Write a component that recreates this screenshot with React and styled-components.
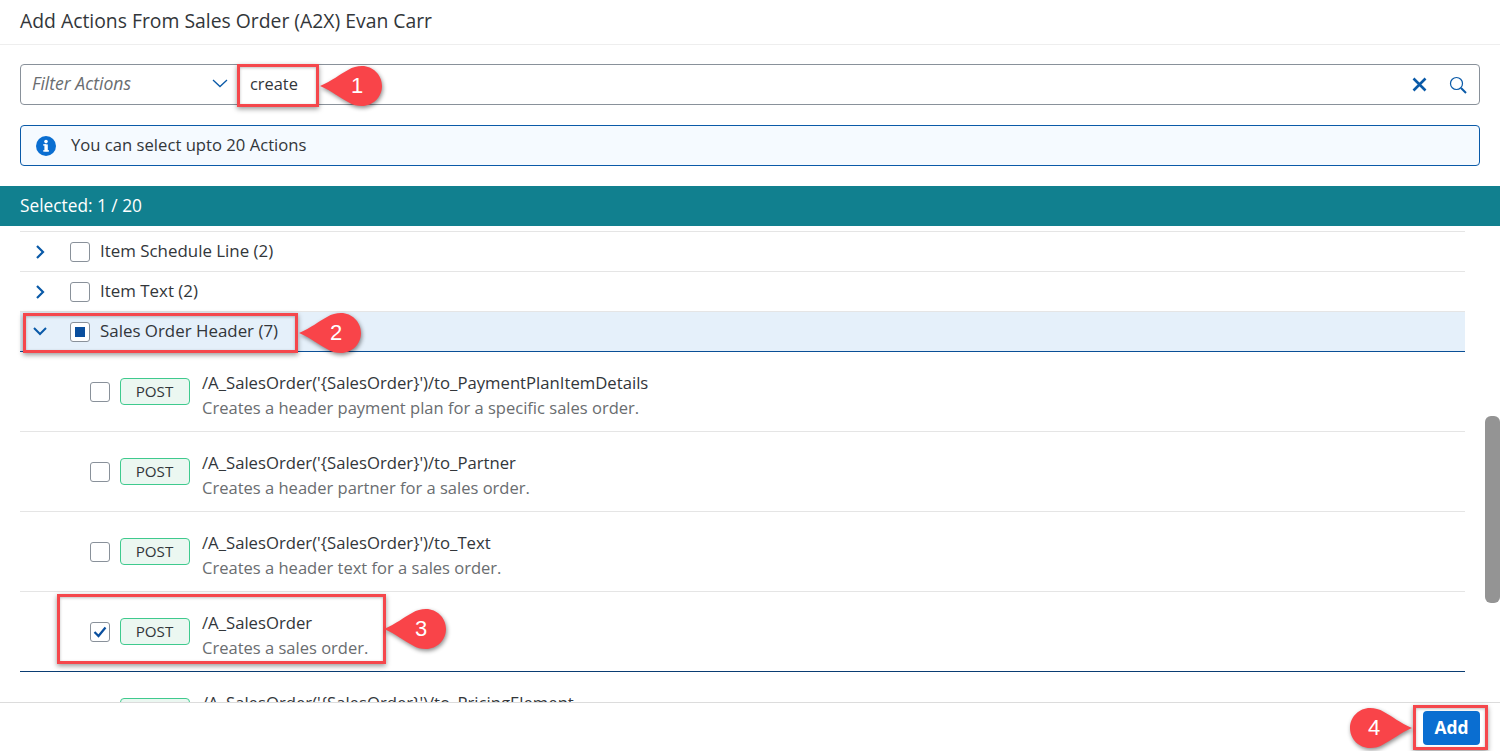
import React from "react";
import styled, { createGlobalStyle } from "styled-components";

const Global = createGlobalStyle`
  html, body { margin: 0; padding: 0; background: #fff; overflow: hidden; }
  * { box-sizing: border-box; }
  body { font-family: "Open Sans", "Liberation Sans", sans-serif; color: #32363a; }
`;

const Page = styled.div`
  position: relative;
  width: 1500px;
  height: 751px;
  display: flex;
  flex-direction: column;
  overflow: hidden;
  background: #fff;
`;
const Header = styled.header`
  height: 45px;
  flex: none;
  display: flex;
  align-items: center;
  padding: 0 20px 4px;
  font-size: 19.35px;
  border-bottom: 1px solid #eeeeee;
`;
const Controls = styled.section`
  flex: none;
  display: flex;
  flex-direction: column;
  gap: 20px;
  padding: 19px 20px 20px;
`;
const FilterBar = styled.div`
  height: 41px;
  display: flex;
  align-items: center;
  padding-right: 2px;
  border: 1px solid #89919a;
  border-radius: 4px;
`;
const FilterSelect = styled.div`
  width: 217px;
  height: 100%;
  flex: none;
  display: flex;
  align-items: center;
  justify-content: space-between;
  padding: 0 8px 3px 11px;
  font-size: 17.6px;
  font-style: italic;
  color: #6a6d70;
  border-right: 1px solid #89919a;
`;
const FilterInput = styled.div`
  flex: 1;
  padding: 0 0 2px 12px;
  font-size: 16.4px;
  color: #32363a;
`;
const IconSlot = styled.span`
  display: flex;
  width: ${p => p.$w}px;
  justify-content: center;
  color: #0a5aa8;
`;
const InfoStrip = styled.div`
  height: 41px;
  display: flex;
  align-items: center;
  gap: 15px;
  padding: 0 15px;
  font-size: 16.65px;
  background: #f5faff;
  border: 1px solid #0a5aa8;
  border-radius: 4px;
`;
const InfoText = styled.span`
  margin-top: -2px;
`;
const Banner = styled.div`
  height: 40px;
  flex: none;
  display: flex;
  align-items: center;
  padding: 0 20px 2px;
  font-size: 17.3px;
  color: #fff;
  background: #11808f;
`;
const ListArea = styled.div`
  flex: 1;
  min-height: 0;
  overflow: hidden;
  padding: 5px 35px 0 20px;
`;
const GroupRow = styled.div`
  height: ${p => (p.$open ? 41 : 40)}px;
  display: flex;
  align-items: center;
  padding-left: 10px;
  font-size: 16.9px;
  border-top: 1px solid #e5e5e5;
  background: ${p => (p.$open ? "#e5f0fa" : "#fff")};
  border-bottom: ${p => (p.$open ? "1px solid #0a4f96" : "none")};
`;
const Chevron = styled.span`
  width: 20px;
  flex: none;
  display: flex;
  justify-content: center;
  color: #0a5aa8;
  margin-right: 20px;
`;
const Box = styled.span`
  width: 20px;
  height: 20px;
  flex: none;
  display: flex;
  align-items: center;
  justify-content: center;
  background: #fff;
  border: 1px solid #89919a;
  border-radius: 3px;
  color: #0a4f9e;
`;
const GroupLabel = styled.span`
  margin-left: 10px;
  line-height: 20px;
  margin-top: -2px;
`;
const Square = styled.span`
  width: 10px;
  height: 10px;
  background: #0a4f9e;
`;
const ActionRow = styled.div`
  height: 80px;
  flex: none;
  display: flex;
  align-items: center;
  padding-left: 70px;
  border-bottom: 1px solid ${p => (p.$last ? "#0a3d73" : "#e5e5e5")};
`;
const Method = styled.span`
  width: 70px;
  height: 27px;
  flex: none;
  margin-left: 10px;
  display: flex;
  align-items: center;
  justify-content: center;
  padding: 0 1px 2px 0;
  font-size: 15.2px;
  color: #32363a;
  background: #ebf7f1;
  border: 1px solid #3fca8e;
  border-radius: 4px;
`;
const ActionText = styled.div`
  margin-left: 12px;
  display: flex;
  flex-direction: column;
  gap: 3px;
  margin-top: 7px;
`;
const ActionPath = styled.span`
  font-size: 16.7px;
  line-height: 22px;
  color: #32363a;
`;
const ActionDesc = styled.span`
  font-size: 16.55px;
  line-height: 22px;
  color: #6a6d70;
`;
const Footer = styled.footer`
  height: 49px;
  flex: none;
  display: flex;
  align-items: center;
  justify-content: flex-end;
  padding: 1px 20px 0 0;
  background: #fff;
  border-top: 1px solid #dcdcdc;
`;
const AddButton = styled.button`
  width: 57px;
  height: 34px;
  font: 700 17.4px "Open Sans", "Liberation Sans", sans-serif;
  color: #fff;
  background: #0a6ed1;
  border: none;
  border-radius: 4px;
  padding: 0 0 2px;
`;
const Thumb = styled.div`
  position: absolute;
  left: 1485px;
  top: 416px;
  width: 15px;
  height: 187px;
  background: #949494;
  border-radius: 6px;
`;
const Highlight = styled.div`
  position: absolute;
  left: ${p => p.$x}px;
  top: ${p => p.$y}px;
  width: ${p => p.$w}px;
  height: ${p => p.$h}px;
  border: 3px solid #f5474c;
  box-shadow: 0 2px 5px rgba(0, 0, 0, 0.4), inset 0 1px 3px rgba(0, 0, 0, 0.25);
`;
const CalloutWrap = styled.div`
  position: absolute;
  left: ${p => p.$x}px;
  top: ${p => p.$y}px;
  width: 64px;
  height: 40px;
  display: flex;
  align-items: center;
  justify-content: ${p => (p.$flip ? "flex-start" : "flex-end")};
  font-family: "Liberation Sans", sans-serif;
  font-size: 22px;
  color: #fff;
  svg { position: absolute; left: 0; top: 0; overflow: visible; filter: drop-shadow(1px 2px 2px rgba(0,0,0,.45)); }
`;
const CalloutNumber = styled.span`
  position: relative;
  width: ${p => (p.$flip ? 48 : 54)}px;
  text-align: center;
  padding-bottom: 1px;
`;

const Callout = ({ x, y, n, flip }) => (
  <CalloutWrap $x={x} $y={y} $flip={flip}>
    <svg width="64" height="40" viewBox="0 0 64 40">
      <path
        d={flip
          ? "M62 20 C50 15 42 8 34 4 C29 1 25 0 20 0 C9 0 0 9 0 20 C0 31 9 40 20 40 C25 40 29 39 34 36 C42 32 50 25 62 20 Z"
          : "M0 20 C12 15 20 8 28 4 C33 1 37 0 42 0 C53 0 62 9 62 20 C62 31 53 40 42 40 C37 40 33 39 28 36 C20 32 12 25 0 20 Z"}
        fill="#f94449"
      />
    </svg>
    <CalloutNumber $flip={flip}>{n}</CalloutNumber>
  </CalloutWrap>
);

const ChevronRight = () => (
  <svg width="10" height="14" viewBox="0 0 10 14" fill="none" stroke="currentColor" strokeWidth="2.2">
    <path d="M2 1l6 6-6 6" />
  </svg>
);
const ChevronDown = ({ w = 14 }) => (
  <svg width={w} height="9" viewBox="0 0 14 9" fill="none" stroke="currentColor" strokeWidth="2">
    <path d="M1 1l6 6 6-6" />
  </svg>
);

const actions = [
  ["/A_SalesOrder('{SalesOrder}')/to_PaymentPlanItemDetails", "Creates a header payment plan for a specific sales order."],
  ["/A_SalesOrder('{SalesOrder}')/to_Partner", "Creates a header partner for a sales order."],
  ["/A_SalesOrder('{SalesOrder}')/to_Text", "Creates a header text for a sales order."],
  ["/A_SalesOrder", "Creates a sales order.", true],
  ["/A_SalesOrder('{SalesOrder}')/to_PricingElement", "Creates a header pricing element for a sales order."],
];

export default function App() {
  return (
    <Page>
      <Global />
      <Header>Add Actions From Sales Order (A2X) Evan Carr</Header>
      <Controls>
        <FilterBar>
          <FilterSelect>
            Filter Actions
            <IconSlot $w={18}>
              <svg width="16" height="9" viewBox="0 0 16 9" fill="none" stroke="currentColor" strokeWidth="1.3"><path d="M1 1l7 6.5L15 1" /></svg>
            </IconSlot>
          </FilterSelect>
          <FilterInput>create</FilterInput>
          <IconSlot $w={40}>
            <svg width="15" height="15" viewBox="0 0 15 15" fill="none" stroke="currentColor" strokeWidth="2.6"><path d="M1.5 1.5l12 12M13.5 1.5l-12 12" /></svg>
          </IconSlot>
          <IconSlot $w={38}>
            <svg width="18" height="18" viewBox="0 0 18 18" fill="none" stroke="currentColor"><circle cx="7.5" cy="7.5" r="6" strokeWidth="1.2" /><path d="M12 12l5 5" strokeWidth="2" /></svg>
          </IconSlot>
        </FilterBar>
        <InfoStrip>
          <svg width="20" height="20" viewBox="0 0 20 20">
            <circle cx="10" cy="10" r="10" fill="#0a6ed1" />
            <rect x="8.4" y="8.4" width="3.4" height="7" fill="#fff" />
            <rect x="7.2" y="8.2" width="3" height="1.4" fill="#fff" />
            <rect x="7.2" y="14.2" width="5.8" height="1.4" fill="#fff" />
            <circle cx="10" cy="5.6" r="1.8" fill="#fff" />
          </svg>
          <InfoText>You can select upto 20 Actions</InfoText>
        </InfoStrip>
      </Controls>
      <Banner>Selected: 1 / 20</Banner>
      <ListArea>
        <GroupRow>
          <Chevron><ChevronRight /></Chevron>
          <Box />
          <GroupLabel>Item Schedule Line (2)</GroupLabel>
        </GroupRow>
        <GroupRow>
          <Chevron><ChevronRight /></Chevron>
          <Box />
          <GroupLabel>Item Text (2)</GroupLabel>
        </GroupRow>
        <GroupRow $open>
          <Chevron><ChevronDown /></Chevron>
          <Box><Square /></Box>
          <GroupLabel>Sales Order Header (7)</GroupLabel>
        </GroupRow>
        {actions.map(([path, desc, checked]) => (
          <ActionRow key={path} $last={checked}>
            <Box>
              {checked && (
                <svg width="14" height="12" viewBox="0 0 14 12" fill="none" stroke="currentColor" strokeWidth="2.2"><path d="M1.5 6l4 4L12.5 1.5" /></svg>
              )}
            </Box>
            <Method>POST</Method>
            <ActionText>
              <ActionPath>{path}</ActionPath>
              <ActionDesc>{desc}</ActionDesc>
            </ActionText>
          </ActionRow>
        ))}
      </ListArea>
      <Footer>
        <AddButton>Add</AddButton>
      </Footer>
      <Thumb />
      <Highlight $x={237} $y={64} $w={82} $h={43} />
      <Highlight $x={23} $y={313} $w={275} $h={40} />
      <Highlight $x={57} $y={594} $w={329} $h={70} />
      <Highlight $x={1413} $y={705} $w={75} $h={45} />
      <Callout x={320} y={66} n="1" />
      <Callout x={299} y={313} n="2" />
      <Callout x={384} y={609} n="3" />
      <Callout x={1350} y={708} n="4" flip />
    </Page>
  );
}
